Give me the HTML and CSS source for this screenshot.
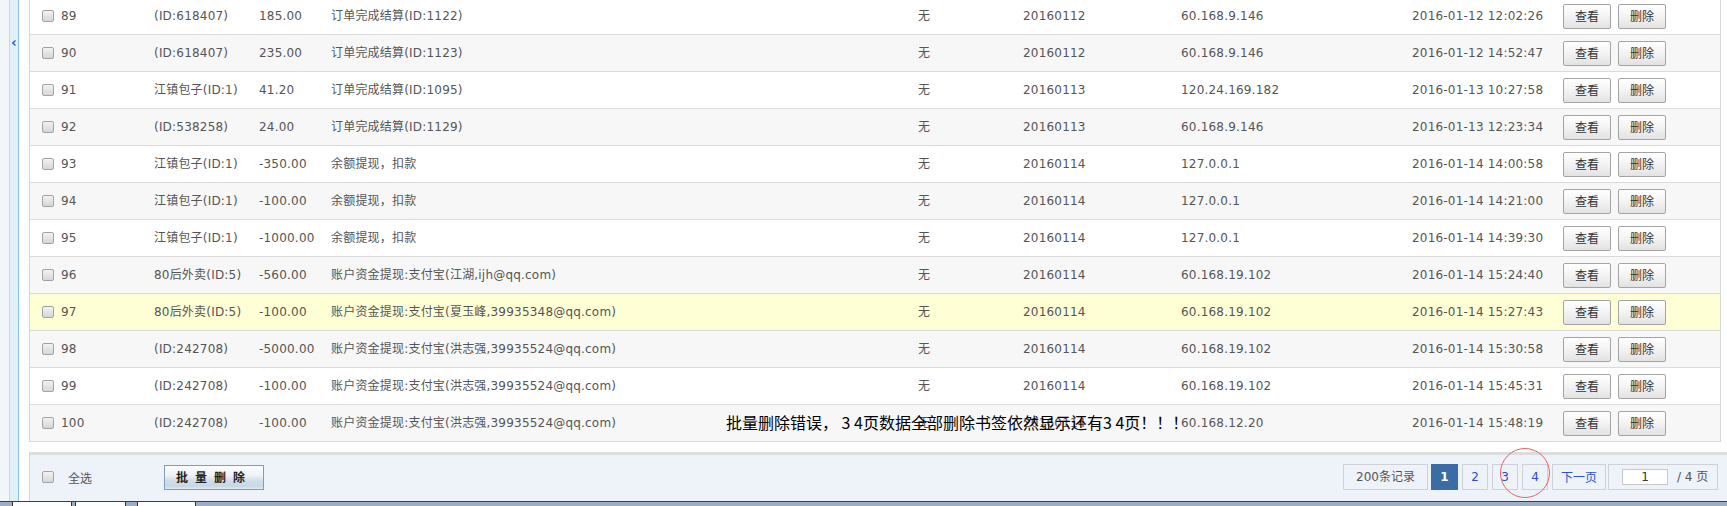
FILE: index.html
```html
<!DOCTYPE html>
<html lang="zh-CN">
<head>
<meta charset="utf-8">
<title>资金记录</title>
<link rel="stylesheet" href="styles.css">
</head>
<body>
<div class="page">
  <div class="main">
    <aside class="sidebar">
      <div class="sb-a"></div>
      <div class="sb-b">
        <svg class="sb-arrow" width="4" height="6" viewBox="0 0 4 6"><path d="M3.5 0.5 L0.8 3 L3.5 5.5" fill="none" stroke="#2468c0" stroke-width="1.4"/></svg>
      </div>
      <div class="sb-c"></div>
    </aside>
    <section class="content">
      <div class="grid">
        <div class="row">
          <div class="c-no"><span class="cb"></span><span>89</span></div>
          <div>(ID:618407)</div><div>185.00</div><div>订单完成结算(ID:1122)</div><div>无</div><div>20160112</div><div>60.168.9.146</div><div>2016-01-12 12:02:26</div>
          <div class="actions"><button class="btn">查看</button><button class="btn">删除</button></div>
        </div>
        <div class="row alt">
          <div class="c-no"><span class="cb"></span><span>90</span></div>
          <div>(ID:618407)</div><div>235.00</div><div>订单完成结算(ID:1123)</div><div>无</div><div>20160112</div><div>60.168.9.146</div><div>2016-01-12 14:52:47</div>
          <div class="actions"><button class="btn">查看</button><button class="btn">删除</button></div>
        </div>
        <div class="row">
          <div class="c-no"><span class="cb"></span><span>91</span></div>
          <div>江镇包子(ID:1)</div><div>41.20</div><div>订单完成结算(ID:1095)</div><div>无</div><div>20160113</div><div>120.24.169.182</div><div>2016-01-13 10:27:58</div>
          <div class="actions"><button class="btn">查看</button><button class="btn">删除</button></div>
        </div>
        <div class="row alt">
          <div class="c-no"><span class="cb"></span><span>92</span></div>
          <div>(ID:538258)</div><div>24.00</div><div>订单完成结算(ID:1129)</div><div>无</div><div>20160113</div><div>60.168.9.146</div><div>2016-01-13 12:23:34</div>
          <div class="actions"><button class="btn">查看</button><button class="btn">删除</button></div>
        </div>
        <div class="row">
          <div class="c-no"><span class="cb"></span><span>93</span></div>
          <div>江镇包子(ID:1)</div><div>-350.00</div><div>余额提现，扣款</div><div>无</div><div>20160114</div><div>127.0.0.1</div><div>2016-01-14 14:00:58</div>
          <div class="actions"><button class="btn">查看</button><button class="btn">删除</button></div>
        </div>
        <div class="row alt">
          <div class="c-no"><span class="cb"></span><span>94</span></div>
          <div>江镇包子(ID:1)</div><div>-100.00</div><div>余额提现，扣款</div><div>无</div><div>20160114</div><div>127.0.0.1</div><div>2016-01-14 14:21:00</div>
          <div class="actions"><button class="btn">查看</button><button class="btn">删除</button></div>
        </div>
        <div class="row">
          <div class="c-no"><span class="cb"></span><span>95</span></div>
          <div>江镇包子(ID:1)</div><div>-1000.00</div><div>余额提现，扣款</div><div>无</div><div>20160114</div><div>127.0.0.1</div><div>2016-01-14 14:39:30</div>
          <div class="actions"><button class="btn">查看</button><button class="btn">删除</button></div>
        </div>
        <div class="row alt">
          <div class="c-no"><span class="cb"></span><span>96</span></div>
          <div>80后外卖(ID:5)</div><div>-560.00</div><div>账户资金提现:支付宝(江湖,ijh@qq.com)</div><div>无</div><div>20160114</div><div>60.168.19.102</div><div>2016-01-14 15:24:40</div>
          <div class="actions"><button class="btn">查看</button><button class="btn">删除</button></div>
        </div>
        <div class="row hover">
          <div class="c-no"><span class="cb"></span><span>97</span></div>
          <div>80后外卖(ID:5)</div><div>-100.00</div><div>账户资金提现:支付宝(夏玉峰,39935348@qq.com)</div><div>无</div><div>20160114</div><div>60.168.19.102</div><div>2016-01-14 15:27:43</div>
          <div class="actions"><button class="btn">查看</button><button class="btn">删除</button></div>
        </div>
        <div class="row alt">
          <div class="c-no"><span class="cb"></span><span>98</span></div>
          <div>(ID:242708)</div><div>-5000.00</div><div>账户资金提现:支付宝(洪志强,39935524@qq.com)</div><div>无</div><div>20160114</div><div>60.168.19.102</div><div>2016-01-14 15:30:58</div>
          <div class="actions"><button class="btn">查看</button><button class="btn">删除</button></div>
        </div>
        <div class="row">
          <div class="c-no"><span class="cb"></span><span>99</span></div>
          <div>(ID:242708)</div><div>-100.00</div><div>账户资金提现:支付宝(洪志强,39935524@qq.com)</div><div>无</div><div>20160114</div><div>60.168.19.102</div><div>2016-01-14 15:45:31</div>
          <div class="actions"><button class="btn">查看</button><button class="btn">删除</button></div>
        </div>
        <div class="row alt">
          <div class="c-no"><span class="cb"></span><span>100</span></div>
          <div>(ID:242708)</div><div>-100.00</div><div>账户资金提现:支付宝(洪志强,39935524@qq.com)</div><div>无</div><div>20160114</div><div>60.168.12.20</div><div>2016-01-14 15:48:19</div>
          <div class="actions"><button class="btn">查看</button><button class="btn">删除</button></div>
        </div>
      </div>
      <div class="footer">
        <div class="footer-left">
          <span class="cb"></span>
          <span class="select-all">全选</span>
          <button class="batch">批量删除</button>
        </div>
        <div class="pager">
          <span class="pg pg-total">200条记录</span>
          <span class="pg pg-cur">1</span>
          <a class="pg pg-num">2</a>
          <a class="pg pg-num">3</a>
          <a class="pg pg-num">4</a>
          <a class="pg pg-next">下一页</a>
          <span class="pg pg-jump"><span class="pg-input">1</span><span class="pg-of">/ 4 页</span></span>
        </div>
      </div>
    </section>
  </div>
  <div class="taskbar">
    <span class="tab tab-1"></span>
    <span class="tab tab-2"></span>
    <span class="tab tab-3"></span>
  </div>
  <div class="note">批量删除错误， 3 4页数据全部删除书签依然显示还有3 4页！！！</div>
  <div class="circle"></div>
</div>
</body>
</html>
```

FILE: styles.css
```css
* { box-sizing: border-box; }
html, body { margin: 0; padding: 0; }
body {
  width: 1727px;
  height: 506px;
  overflow: hidden;
  background: #fff;
  font-family: "DejaVu Sans", "Noto Sans CJK SC", sans-serif;
  font-size: 12px;
  color: #555;
}
.page {
  position: relative;
  height: 506px;
  display: flex;
  flex-direction: column;
}
.main {
  height: 501px;
  display: flex;
  overflow: hidden;
}
.sidebar { width: 29px; flex: none; display: flex; }
.sb-a { width: 10px; background: #f1f7f9; border-right: 1px solid #c6dbe4; }
.sb-b {
  width: 9px;
  background: #e0f0f6;
  border-right: 1px solid #8cc2e2;
  padding-top: 40px;
  display: flex;
  justify-content: center;
  align-items: flex-start;
}
.sb-arrow { display: block; }
.sb-c { width: 10px; background: #fff; }

.content {
  flex: 1;
  min-width: 0;
  display: flex;
  flex-direction: column;
}
.grid {
  margin-top: -2px;
  width: 1692px;
  border-left: 1px solid #d6d6d6;
  border-right: 1px solid #d6d6d6;
}
.row {
  display: grid;
  grid-template-columns: 124px 105px 72px 587px 105px 158px 231px 151px 157px;
  align-items: center;
  height: 37px;
  border-bottom: 1px solid #dadada;
  background: #fff;
  line-height: 16px;
  letter-spacing: 0.2px;
  white-space: nowrap;
}
.row.alt { background: #f7f7f7; }
.row.hover { background: #ffffd6; }
.c-no { display: flex; align-items: center; padding-left: 12px; }
.c-no .cb { margin-right: 7px; }

.cb {
  display: inline-block;
  width: 12px;
  height: 12px;
  border: 1px solid #a3a3a3;
  border-radius: 2px;
  background: linear-gradient(#f2f2f2, #d6d6d6);
  flex: none;
}

.actions { display: flex; gap: 7px; }
.btn {
  width: 48px;
  height: 25px;
  padding: 0;
  border: 1px solid #a4a4a4;
  border-radius: 2px;
  background: linear-gradient(#ffffff, #f3f3f3 50%, #e2e2e2);
  font-family: "Noto Sans CJK SC", sans-serif;
  font-size: 12px;
  color: #333;
  line-height: 22px;
}

.footer {
  margin-top: 10px;
  height: 49px;
  border-top: 3px solid #dcdcdc;
  border-left: 1px solid #d6d6d6;
  background: #eef2f9;
  display: flex;
  align-items: center;
  justify-content: space-between;
  padding: 0 9px 2px 12px;
}
.footer-left { display: flex; align-items: center; }
.select-all {
  margin-left: 14px;
  font-family: "Noto Sans CJK SC", sans-serif;
  color: #555;
}
.batch {
  margin-left: 72px;
  width: 100px;
  height: 25px;
  padding: 0;
  border: 1px solid #7f9db9;
  background: linear-gradient(#fbfcfd 0%, #eef3f7 40%, #d2dfeb 62%, #c6d7e6 88%, #e4ecf3 100%);
  font-family: "Noto Sans CJK SC", sans-serif;
  font-weight: bold;
  font-size: 12px;
  letter-spacing: 7px;
  color: #222;
  line-height: 22px;
}

.pager { display: flex; align-items: center; }
.pg {
  height: 26px;
  border: 1px solid #cfd1d6;
  line-height: 24px;
  text-align: center;
  margin-left: 4px;
  color: #555;
  text-decoration: none;
}
.pg-total { width: 85px; margin-left: 0; }
.pg-cur {
  width: 27px;
  margin-left: 3px;
  background: #3a6ca6;
  border-color: #3a6ca6;
  color: #fff;
  font-weight: bold;
}
.pg-num { width: 26px; color: #3348d2; }
.pg-next { width: 54px; color: #2a55cc; font-family: "Noto Sans CJK SC", sans-serif; }
.pg-jump {
  width: 110px;
  margin-left: 2px;
  display: flex;
  align-items: center;
  padding-left: 13px;
}
.pg-input {
  width: 46px;
  height: 16px;
  border: 1px solid #c8c8c8;
  background: #fff;
  line-height: 14px;
  text-align: center;
  color: #333;
}
.pg-of { margin-left: 9px; color: #555; }

.taskbar {
  height: 5px;
  border-top: 1px solid #3e3e3e;
  background: #9cadc6;
  display: flex;
  align-items: stretch;
}
.tab {
  display: block;
  background: #fff;
  border-left: 1px solid #333;
  border-right: 1px solid #333;
}
.tab-1 { margin-left: 12px; width: 60px; }
.tab-2 { margin-left: 3px; width: 51px; }
.tab-3 { margin-left: 11px; width: 59px; }

.note {
  position: absolute;
  left: 726px;
  top: 411px;
  font-family: "Noto Sans CJK SC", sans-serif;
  font-size: 16px;
  line-height: 22px;
  color: #000;
  white-space: nowrap;
}
.circle {
  position: absolute;
  left: 1500px;
  top: 448px;
  width: 50px;
  height: 50px;
  border: 1px solid #e26464;
  border-radius: 50%;
}
```
